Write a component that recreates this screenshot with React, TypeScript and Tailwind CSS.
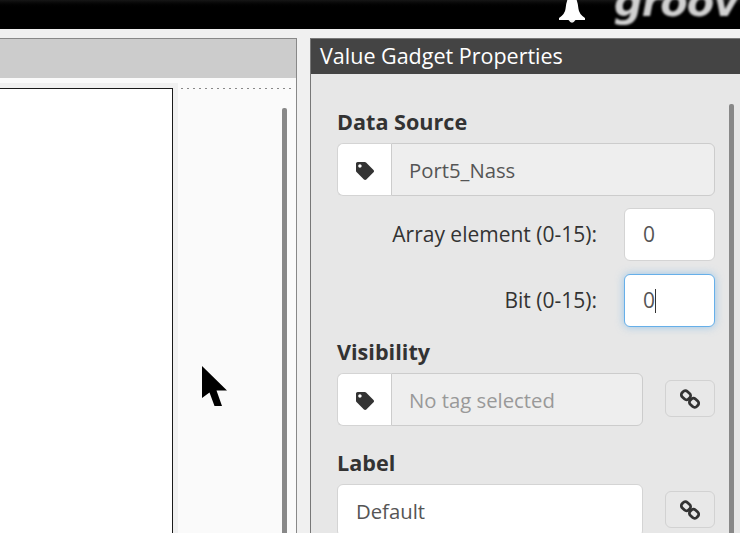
import { FaTag } from "react-icons/fa";

function LinkIcon() {
  return (
    <svg width="20" height="20" viewBox="0 0 20 20" fill="none" stroke="#333" strokeWidth="2.8">
      <rect x="1.5" y="2.5" width="9" height="7.5" rx="3" transform="rotate(42 6 6.2)" />
      <rect x="9.5" y="10" width="9" height="7.5" rx="3" transform="rotate(42 14 13.8)" />
    </svg>
  );
}

function LinkButton() {
  return (
    <button
      type="button"
      className="mt-[7px] flex h-[37px] w-[50px] items-center justify-center self-start rounded-[6px] border border-[#d2d2d2] bg-[#e8e8e8]"
    >
      <LinkIcon />
    </button>
  );
}

function TagField({ value, muted, className }: { value: string; muted?: boolean; className: string }) {
  return (
    <div className={`flex h-[53px] ${className}`}>
      <div className="flex w-[54px] items-center justify-center rounded-l-[6px] border border-r-0 border-[#d4d4d4] bg-white pt-[2px] text-[#333]">
        <FaTag className="h-[18px] w-[18px]" />
      </div>
      <div
        className={`flex flex-1 items-center rounded-r-[6px] border border-[#cccccc] bg-[#eeeeee] pt-[1px] pl-[17px] text-[20.3px] ${
          muted ? "text-[#999999]" : "text-[#555555]"
        }`}
      >
        {value}
      </div>
    </div>
  );
}

function NumberRow({ label, focused, className }: { label: string; focused?: boolean; className: string }) {
  return (
    <div className={`flex items-center justify-end ${className}`}>
      <span className="mr-[27px] text-[21px] text-[#333]">{label}</span>
      <div
        className={`flex h-[53px] w-[91px] items-center rounded-[6px] border bg-white pt-[1px] pl-[18px] text-[21px] text-[#555] ${
          focused ? "border-[#66afe9] shadow-[0_0_8px_rgba(102,175,233,0.6)]" : "border-[#d4d4d4]"
        }`}
      >
        0{focused ? <span className="h-[24px] w-px bg-[#333]" /> : null}
      </div>
    </div>
  );
}

export default function App() {
  return (
    <div className="flex h-[533px] w-[740px] flex-col overflow-hidden bg-[#f0f0f0] font-['Open_Sans','Noto_Sans',sans-serif]">
      {/* top bar */}
      <div className="flex h-[29px] shrink-0 items-start justify-end overflow-hidden bg-gradient-to-b from-[#161616] via-black via-[30%] to-black pr-[12px]">
        <svg width="28" height="24" viewBox="0 0 28 24" className="mr-[28px] shrink-0">
          <path
            d="M11 -4 L17 -4 Q20 2 20.5 9 Q21 14 27 18 L27 20 L1 20 L1 18 Q7 14 7.5 9 Q8 2 11 -4 Z"
            fill="#fff"
          />
          <path d="M10.5 20 Q14 25.5 17.5 20 Z" fill="#eee" />
        </svg>
        <span className="mt-[-14px] w-[114px] shrink-0 font-['DejaVu_Sans',sans-serif] text-[40px] leading-[32px] font-bold text-[#d0d0d0] italic blur-[1.2px] [letter-spacing:-1px]">
          groov
        </span>
      </div>

      <div className="flex min-h-0 flex-1 pt-[9px]">
        {/* editor panel */}
        <div className="flex w-[297px] shrink-0 flex-col border-t border-r border-[#888888] bg-[#fafafa]">
          <div className="h-[39px] shrink-0 bg-[#cccccc]" />
          <div className="flex min-h-0 flex-1 pt-[5px]">
            <div className="h-full w-[178px] shrink-0 bg-[#f0f0f0] pt-[5px]">
              <div className="h-[600px] w-[173px] border border-l-0 border-[#1a1a1a] bg-white" />
            </div>
            <div className="flex min-w-0 flex-1 flex-col">
              <div className="mt-[5px] ml-[3px] h-px w-[110px] bg-[repeating-linear-gradient(90deg,#888888_0,#888888_2px,transparent_2px,transparent_6px)]" />
              <div className="mt-[19px] ml-[104px] h-[600px] w-[5px] rounded-t-[2px] bg-[#888888]" />
            </div>
          </div>
        </div>

        {/* properties panel */}
        <div className="ml-[13px] flex min-w-0 flex-1 flex-col border-t border-l border-[#777777] bg-[#e7e7e7]">
          <div className="flex h-[35px] shrink-0 items-center bg-[#444444] pb-[2px] pl-[9px] text-[21.5px] leading-none text-white">
            Value Gadget Properties
          </div>
          <div className="flex min-h-0 flex-1">
            <div className="ml-[26px] w-[378px] shrink-0">
              <div className="mt-[34px] text-[21.6px] leading-[28px] font-bold text-[#333]">Data Source</div>
              <TagField value="Port5_Nass" className="mt-[7px]" />
              <NumberRow label="Array element (0-15):" className="mt-[12px]" />
              <NumberRow label="Bit (0-15):" focused className="mt-[13px]" />
              <div className="mt-[11px] text-[21.6px] leading-[28px] font-bold text-[#333]">Visibility</div>
              <div className="mt-[7px] flex justify-between">
                <TagField value="No tag selected" muted className="w-[306px]" />
                <LinkButton />
              </div>
              <div className="mt-[23px] text-[21.6px] leading-[28px] font-bold text-[#333]">Label</div>
              <div className="mt-[7px] flex justify-between">
                <div className="flex h-[53px] w-[306px] items-center rounded-[6px] border border-[#d4d4d4] bg-white pt-[1px] pl-[18px] text-[20.3px] text-[#555]">
                  Default
                </div>
                <LinkButton />
              </div>
            </div>
            <div className="mt-[30px] ml-[14px] h-[600px] w-[5px] rounded-t-[2px] bg-[#888888]" />
          </div>
        </div>
      </div>

      {/* mouse pointer */}
      <svg width="27" height="44" viewBox="0 0 27 44" className="absolute top-[365px] left-[201px]">
        <path d="M1 1 L26 25.5 L15.5 25.5 L21 41 L13.5 41 L8.5 27.5 L1 33 Z" fill="#000" />
      </svg>
    </div>
  );
}
